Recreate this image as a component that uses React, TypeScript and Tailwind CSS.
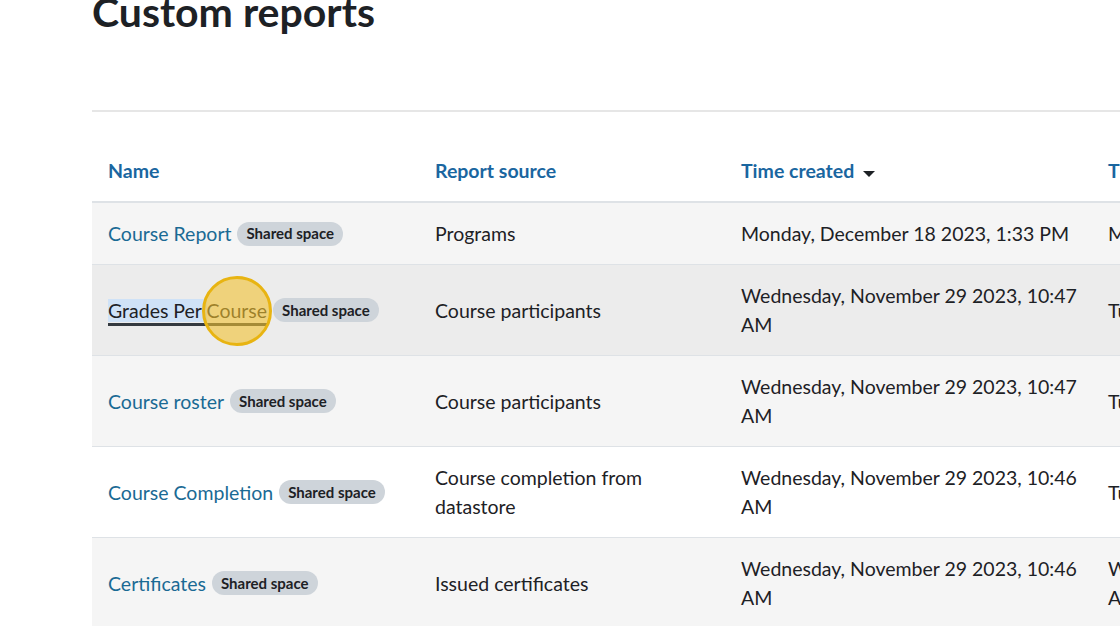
import React from "react";

const rows = [
  { name: "Course Report", source: ["Programs"], time: ["Monday, December 18 2023, 1:33 PM"], next: ["M"], bg: "bg-[#f5f5f5]" },
  { name: "Grades Per Course", source: ["Course participants"], time: ["Wednesday, November 29 2023, 10:47", "AM"], next: ["Tu"], bg: "bg-[#ececec]", active: true },
  { name: "Course roster", source: ["Course participants"], time: ["Wednesday, November 29 2023, 10:47", "AM"], next: ["Tu"], bg: "bg-[#f5f5f5]" },
  { name: "Course Completion", source: ["Course completion from", "datastore"], time: ["Wednesday, November 29 2023, 10:46", "AM"], next: ["Tu"], bg: "bg-white" },
  { name: "Certificates", source: ["Issued certificates"], time: ["Wednesday, November 29 2023, 10:46", "AM"], next: ["W", "A"], bg: "bg-[#f5f5f5]" },
];

function Badge() {
  return (
    <span className="ml-[6px] inline-flex h-[24px] items-center whitespace-nowrap rounded-full bg-[#ced4da] px-[9px] text-[15px] font-bold leading-none text-[#1d2125]">
      Shared space
    </span>
  );
}

function Lines({ lines }: { lines: string[] }) {
  return (
    <div>
      {lines.map((l, i) => (
        <div key={i} className="whitespace-nowrap">{l}</div>
      ))}
    </div>
  );
}

export default function App() {
  return (
    <div
      className="h-[626px] w-[1120px] overflow-hidden bg-white text-[#1d2125]"
      style={{ fontFamily: '"Lato", "Noto Sans", sans-serif' }}
    >
      <div className="pl-[92px]">
        <h1 className="-mt-[11px] h-[121px] text-[41px] font-bold leading-[46px] text-[#1d2125]">Custom reports</h1>
        <div className="h-[2px] bg-[#e6e6e6]" />
        <div className="pt-[28px]">
          <div className="w-[1092px] text-[19.5px] leading-[29px]">
            {/* header */}
            <div className="flex border-b-2 border-[#dee2e6] font-bold text-[#1a66a0]">
              <div className="w-[327px] shrink-0 px-[16px] py-[16px]">Name</div>
              <div className="w-[306px] shrink-0 px-[16px] py-[16px]">Report source</div>
              <div className="flex w-[367px] shrink-0 items-center px-[16px] py-[16px]">
                Time created
                <svg width="12" height="6" viewBox="0 0 12 6" className="ml-[9px] mt-[6px]">
                  <path d="M0 0 L12 0 L6 6 Z" fill="#1d2125" />
                </svg>
              </div>
              <div className="w-[92px] shrink-0 px-[16px] py-[16px]">T</div>
            </div>
            {rows.map((r, i) => (
              <div key={i} className={`flex items-center border-b border-[#dee2e6] ${r.bg}`}>
                <div className="flex w-[327px] shrink-0 items-center px-[16px] py-[16px]">
                  {r.active ? (
                    <span className="relative whitespace-nowrap text-[#1d2125]">
                      <span className="border-b-[3px] border-[#343a40] pb-[1px]">
                        <span className="bg-[#cfe2f7]">Grades Per </span>
                        <span>Course</span>
                      </span>
                      <span className="absolute left-[94px] top-[-20px] h-[70px] w-[70px] rounded-full border-[3px] border-[#e8b412] bg-[#f2c230]/60" />
                    </span>
                  ) : (
                    <span className="whitespace-nowrap text-[#1a6a94]">{r.name}</span>
                  )}
                  <Badge />
                </div>
                <div className="w-[306px] shrink-0 px-[16px] py-[16px]">
                  <Lines lines={r.source} />
                </div>
                <div className="w-[367px] shrink-0 px-[16px] py-[16px]">
                  <Lines lines={r.time} />
                </div>
                <div className="w-[92px] shrink-0 px-[16px] py-[16px]">
                  <Lines lines={r.next} />
                </div>
              </div>
            ))}
          </div>
        </div>
      </div>
    </div>
  );
}
